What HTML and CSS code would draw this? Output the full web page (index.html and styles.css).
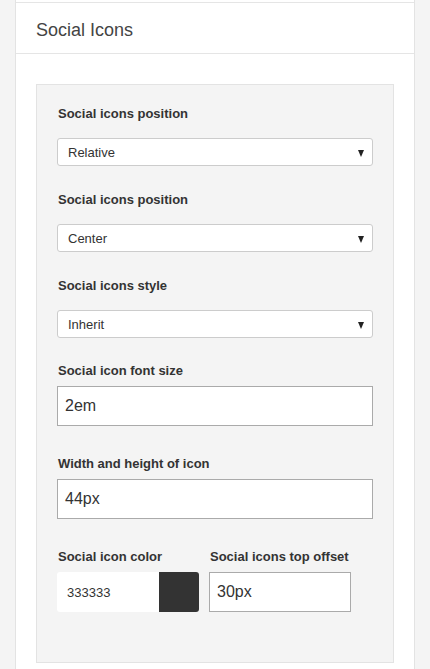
FILE: index.html
```html
<!DOCTYPE html>
<html>
<head>
<meta charset="utf-8">
<link rel="stylesheet" href="styles.css">
</head>
<body>
<div class="page">
  <div class="card">
    <div class="card-prev"></div>
    <div class="card-header">Social Icons</div>
    <div class="card-body">
      <div class="panel">
        <div class="group group-select">
          <div class="label">Social icons position</div>
          <div class="select"><span class="select-text">Relative</span><span class="caret"></span></div>
        </div>
        <div class="group group-select">
          <div class="label">Social icons position</div>
          <div class="select"><span class="select-text">Center</span><span class="caret"></span></div>
        </div>
        <div class="group group-select group-last-select">
          <div class="label">Social icons style</div>
          <div class="select"><span class="select-text">Inherit</span><span class="caret"></span></div>
        </div>
        <div class="group group-input">
          <div class="label">Social icon font size</div>
          <div class="input">2em</div>
        </div>
        <div class="group group-input">
          <div class="label">Width and height of icon</div>
          <div class="input">44px</div>
        </div>
        <div class="row">
          <div class="col">
            <div class="label">Social icon color</div>
            <div class="color">
              <span class="color-text">333333</span>
              <span class="swatch"></span>
            </div>
          </div>
          <div class="col">
            <div class="label">Social icons top offset</div>
            <div class="input">30px</div>
          </div>
        </div>
      </div>
    </div>
  </div>
</div>
</body>
</html>
```

FILE: styles.css
```css
* { box-sizing: border-box; }
html, body { margin: 0; padding: 0; }
body {
  background: #f4f4f4;
  font-family: "Liberation Sans", Arial, sans-serif;
  color: #333;
}
.page {
  padding: 0 15px;
  height: 669px;
  overflow: hidden;
}
.card {
  width: 400px;
  background: #fff;
  border-left: 1px solid #e3e3e3;
  border-right: 1px solid #e3e3e3;
  min-height: 700px;
}
.card-prev { height: 2px; }
.card-header {
  border-top: 1px solid #e5e5e5;
  border-bottom: 1px solid #e5e5e5;
  padding: 17px 20px 13px;
  font-size: 18px;
  line-height: 20px;
  color: #444;
}
.card-body { padding: 30px 20px 0; }
.panel {
  background: #f4f4f4;
  border: 1px solid #e3e3e3;
  padding: 21px 20px 50px;
}
.label {
  font-size: 13px;
  font-weight: bold;
  line-height: 16px;
  color: #333;
  padding-left: 1px;
}
.group-select .label { margin-bottom: 16px; }
.group-select { margin-bottom: 26px; }
.group-last-select { margin-bottom: 25px; }
.group-input .label { margin-bottom: 7px; }
.group-input { margin-bottom: 30px; }
.select {
  position: relative;
  height: 28px;
  background: #fff;
  border: 1px solid #ccc;
  border-radius: 3px;
  display: flex;
  align-items: center;
  padding-left: 10px;
  font-size: 13px;
  color: #333;
}
.caret {
  position: absolute;
  right: 8px;
  top: 11px;
  width: 0;
  height: 0;
  border-left: 3.5px solid transparent;
  border-right: 3.5px solid transparent;
  border-top: 7px solid #222;
}
.input {
  height: 40px;
  background: #fff;
  border: 1px solid #aaa;
  display: flex;
  align-items: center;
  padding-left: 7px;
  font-size: 16px;
  color: #333;
}
.row {
  display: flex;
  gap: 10px;
}
.col { width: 142px; }
.col .label { margin-bottom: 7px; }
.color {
  height: 40px;
  display: flex;
  border-radius: 3px;
  overflow: hidden;
}
.color-text {
  flex: 1;
  background: #fff;
  display: flex;
  align-items: center;
  padding-left: 10px;
  font-size: 13px;
  color: #333;
}
.swatch {
  width: 40px;
  background: #333;
}
```
